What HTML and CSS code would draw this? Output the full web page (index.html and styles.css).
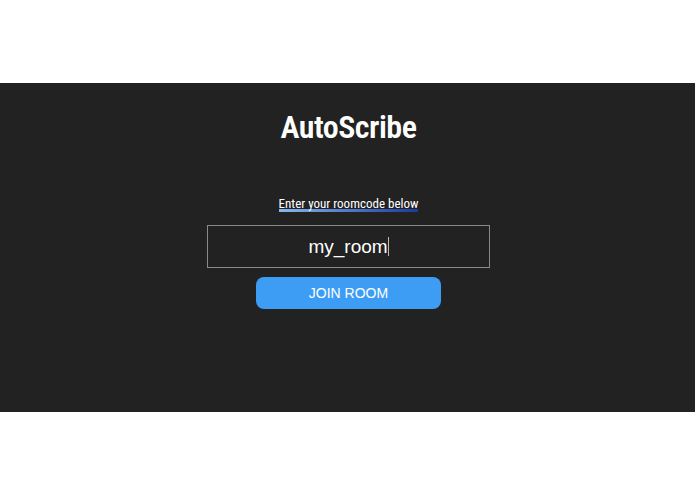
FILE: index.html
```html
<!DOCTYPE html>
<html>
<head>
  <title>AutoScribe</title>
  <link rel="stylesheet" href="styles.css">
</head>
<body>
  <div class="panel">
    <h1>AutoScribe</h1>

    <div class="prompt">Enter your roomcode below</div>

    <div class="form">
      <div class="code-input">my_room<span class="caret"></span></div>
      <button class="join-btn">JOIN ROOM</button>
    </div>
  </div>
</body>
</html>
```
FILE: styles.css
```css
body {
  margin: 0;
  background-color: #fff;
  font-family: "Liberation Sans", Arial, sans-serif;
}
.panel {
  margin-top: 83px;
  height: 329px;
  padding-left: 2px;
  background-color: #222;
  color: #fff;
  display: flex;
  flex-direction: column;
  align-items: center;
}
h1 {
  margin: 24px 0 0;
  font-family: "Roboto Condensed", "Roboto", sans-serif;
  font-size: 32px;
  font-weight: 600;
  letter-spacing: -0.5px;
  line-height: 40px;
}
.prompt {
  margin-top: 49px;
  font-family: "Roboto Condensed", "Roboto", sans-serif;
  font-size: 13px;
  line-height: 16px;
  background: linear-gradient(to right, #86b8f2, #1b3a9c) bottom / 100% 3px no-repeat;
}
.form {
  margin-top: 13px;
  display: flex;
  flex-direction: column;
  align-items: center;
  gap: 9px;
}
.code-input {
  width: 281px;
  height: 41px;
  border: 1px solid #8a8a8a;
  display: flex;
  align-items: center;
  justify-content: center;
  font-size: 19px;
}
.caret {
  display: inline-block;
  width: 1px;
  height: 19px;
  background-color: #bbb;
}
.join-btn {
  width: 185px;
  height: 32px;
  border: none;
  border-radius: 8px;
  background-color: #3d9df5;
  color: #fff;
  font-family: "Liberation Sans", Arial, sans-serif;
  font-size: 14px;
  cursor: pointer;
}
```
